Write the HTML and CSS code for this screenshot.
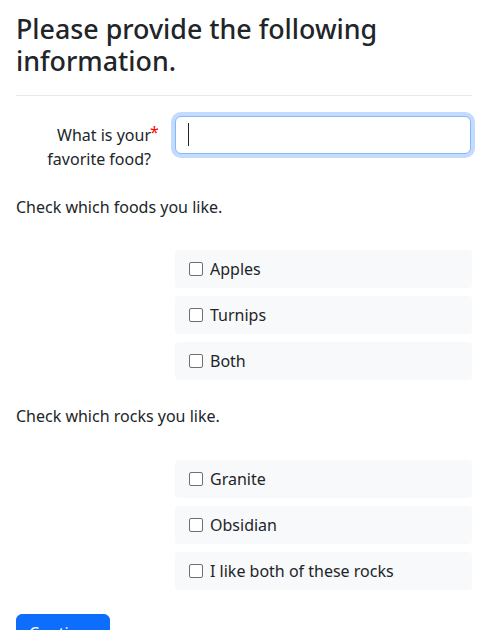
FILE: index.html
```html
<!DOCTYPE html>
<html>
<head>
<meta charset="utf-8">
<link rel="stylesheet" href="styles.css">
</head>
<body>
<main class="page">
  <h2 class="title">Please provide the following information.</h2>
  <hr class="rule">
  <div class="field-row">
    <label class="field-label" for="food"><span class="req-wrap">What is your</span> favorite food?</label>
    <div class="field-control">
      <input id="food" class="text-input" type="text">
      <span class="caret"></span>
    </div>
  </div>
  <fieldset class="group">
    <legend class="group-title">Check which foods you like.</legend>
    <div class="options">
      <label class="option"><input type="checkbox" class="check"><span>Apples</span></label>
      <label class="option"><input type="checkbox" class="check"><span>Turnips</span></label>
      <label class="option"><input type="checkbox" class="check"><span>Both</span></label>
    </div>
  </fieldset>
  <fieldset class="group group-second">
    <legend class="group-title">Check which rocks you like.</legend>
    <div class="options">
      <label class="option"><input type="checkbox" class="check"><span>Granite</span></label>
      <label class="option"><input type="checkbox" class="check"><span>Obsidian</span></label>
      <label class="option"><input type="checkbox" class="check"><span>I like both of these rocks</span></label>
    </div>
  </fieldset>
  <button class="btn-primary" type="button">Continue</button>
</main>
</body>
</html>
```

FILE: styles.css
```css
* { box-sizing: border-box; }
html, body { margin: 0; padding: 0; background: #fff; }
body {
  font-family: "Noto Sans", "DejaVu Sans", sans-serif;
  font-size: 16px;
  line-height: 24px;
  color: #212529;
}
.page {
  padding: 13px 16px 16px 16px;
  width: 488px;
}
.title {
  margin: 0;
  font-size: 26.8px;
  line-height: 32px;
  font-weight: 500;
}
.rule {
  margin: 18px 0 20px 0;
  border: 0;
  border-top: 1px solid #e9eaeb;
  height: 0;
}
.field-row {
  display: grid;
  grid-template-columns: 135px 296px;
  column-gap: 24px;
}
.field-label {
  text-align: right;
  padding-top: 7px;
  padding-right: 0;
}
.req-wrap {
  position: relative;
}
.req-wrap::after {
  content: "*";
  color: #f00;
  position: absolute;
  left: calc(100% - 1px);
  top: -4px;
}
.field-control {
  position: relative;
}
.text-input {
  display: block;
  width: 296px;
  height: 38px;
  border: 1px solid #86b7fe;
  border-radius: 6px;
  padding: 6px 12px;
  font: inherit;
  color: #212529;
  outline: 0;
  box-shadow: 0 0 0 4px rgba(13, 110, 253, 0.25);
  background: #fff;
}
.caret {
  position: absolute;
  left: 13px;
  top: 7px;
  width: 1px;
  height: 23px;
  background: #212529;
}
.group {
  border: 0;
  margin: 24px 0 0 0;
  padding: 0;
  min-width: 0;
}
.group-title {
  padding: 0;
  margin: 0;
  float: left;
  width: 100%;
}
.options {
  clear: both;
  padding-top: 31px;
  margin-left: 159px;
  display: flex;
  flex-direction: column;
  gap: 8px;
}
.group-second .options {
  padding-top: 32px;
}
.option {
  display: flex;
  align-items: center;
  height: 38px;
  padding-left: 14px;
  background: #f8f9fa;
  border-radius: 4px;
}
.check {
  appearance: none;
  -webkit-appearance: none;
  width: 14px;
  height: 14px;
  margin: 0 7px 0 0;
  border: 1.5px solid #6f6f6f;
  border-radius: 2px;
  background: #fff;
}
.btn-primary {
  margin-top: 24px;
  display: inline-block;
  font: inherit;
  line-height: 24px;
  padding: 6px 12px;
  color: #fff;
  background: #0d6efd;
  border: 1px solid #0d6efd;
  border-radius: 6px;
}
```
